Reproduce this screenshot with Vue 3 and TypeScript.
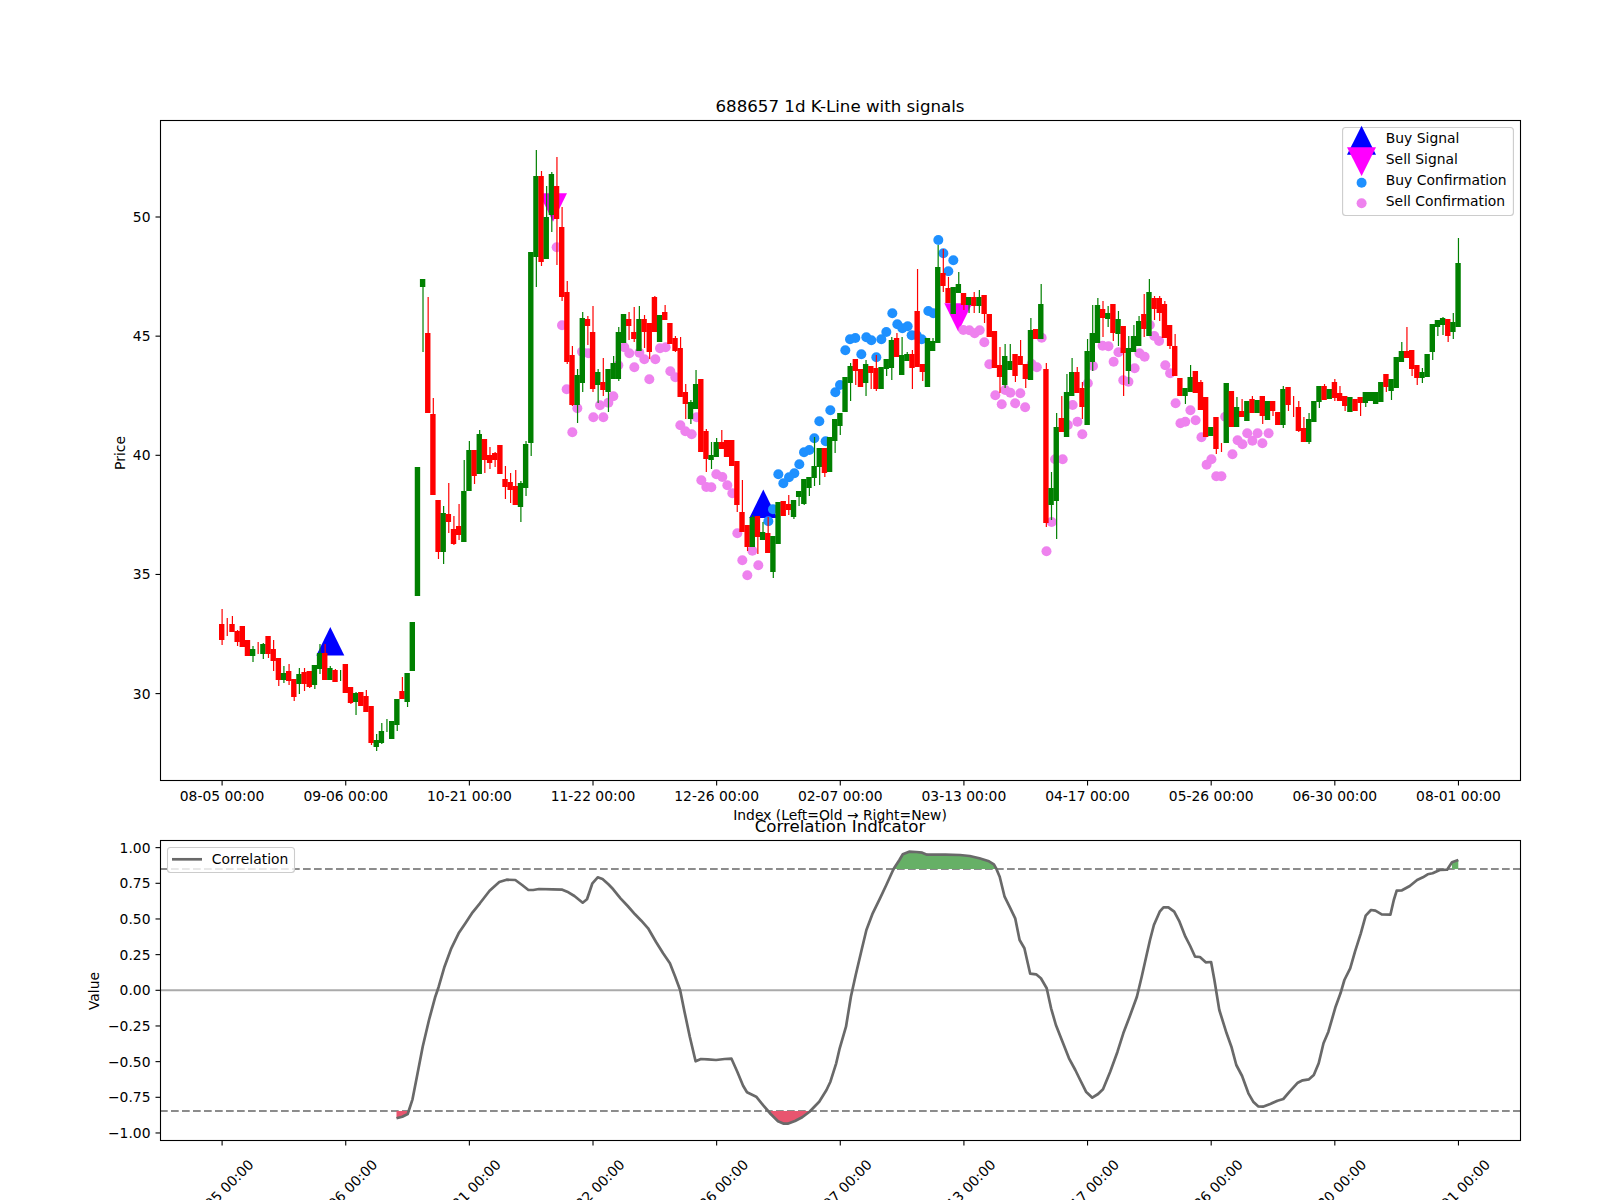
<script setup lang="ts">
type Candle = [number, number, number, number?, number?]
const raw: Candle[] = [
[0,624,640,609,645],[0,628,628,618,636],[0,624,632,616,632],[0,631,642,630,646],[0,626,647],[0,640,656],[1,649,656,646,662],[0,648,648,642,654],[1,644,654,643,659],[0,636,654,636,658],
[0,649,661,640,671],[0,658,680,658,686],[1,673,680,666,683],[0,671,681,664,685],[0,679,697,679,701],[1,674,684,668,694],[0,672,684,668,691],[0,671,687,671,688],[1,665,685,665,689],[1,653,669,644,674],
[0,653,680,644,680],[1,668,680,666,680],[0,670,682,669,682],[1,675,675,670,681],[0,664,693],[0,687,703,687,704],[1,693,702,692,715],[0,692,706],[0,696,712,690,712],[0,706,743,706,745],
[1,740,747,734,751],[1,731,743,723,744],[1,725,725,719,732],[1,721,739],[1,699,725,699,731],[0,691,699,677,699],[1,673,702,673,707],[1,622,671],[1,467,596],[1,279,287,279,352],
[0,333,413,297,413],[0,414,495,398,495],[0,500,552,500,559],[1,513,552,506,564],[0,514,522,483,533],[0,529,544,516,545],[0,526,535,504,540],[1,491,542,460,542],[1,450,491,441,491],[0,450,476,450,484],
[1,434,474,430,474],[0,439,460,439,473],[0,455,463,447,469],[0,453,460,452,467],[0,445,474],[0,479,487,466,499],[0,482,490,473,503],[0,486,505,470,505],[1,483,507,481,522],[1,444,488,441,496],
[1,252,443,252,456],[1,176,257,150,287],[0,176,262,171,266],[1,217,259,186,259],[1,174,215,172,232],[0,186,219,157,265],[0,227,297,207,301],[0,292,362,281,364],[0,355,405,346,406],[1,375,405,369,423],
[1,318,383,312,392],[0,319,326,316,345],[0,332,389,306,392],[1,372,385,369,403],[0,382,390,358,396],[1,369,392,369,412],[1,363,379,356,379],[1,332,379,327,381],[1,314,343],[0,319,326,312,340],
[0,332,339,307,342],[1,319,351,306,351],[0,319,332,315,348],[0,323,352,323,359],[0,297,332,296,332],[1,315,342],[0,312,320,305,320],[0,323,344],[0,338,351,336,352],[0,348,397,337,397],
[0,392,404,384,419],[1,402,419,400,424],[1,384,409,370,409],[0,379,452],[0,431,459,429,472],[1,455,460,442,469],[1,442,457,438,457],[0,442,449,430,449],[0,440,457],[0,440,466],
[0,461,505,461,512],[0,512,532,480,532],[0,525,547,525,551],[1,517,547,515,547],[0,516,537,516,554],[1,532,540,522,540],[0,533,553,517,553],[1,536,572,536,578],[1,502,544],[0,501,516],
[0,504,510,495,515],[1,500,517,500,519],[1,491,497,491,506],[1,479,504,479,505],[1,477,488,477,496],[1,466,478,437,486],[1,448,467,448,485],[0,448,473,448,477],[1,437,472],[1,419,441,419,453],
[1,413,426,413,435],[1,377,412],[1,366,383,363,401],[0,359,371,359,385],[0,369,387],[1,364,383,360,396],[0,366,373,366,389],[0,368,389,355,391],[1,367,389],[1,359,369,359,376],
[1,340,368,337,380],[0,338,357,333,357],[1,355,375,337,375],[1,354,361,352,361],[0,354,368,350,389],[0,311,367,269,367],[0,364,372,364,381],[1,338,387],[1,341,351,338,351],[1,267,343,245,343],
[0,273,286,249,292],[0,288,303,277,303],[1,287,314],[1,284,293,272,293],[0,293,305,293,310],[1,297,305,297,313],[0,297,306,292,313],[1,297,306,290,313],[0,295,314,295,323],[0,314,337],
[0,331,368],[0,365,377,347,393],[1,356,385,344,388],[1,361,370,344,370],[0,354,376,354,382],[0,356,365,340,365],[0,364,379,364,388],[1,330,380,318,380],[0,329,339],[1,304,339,284,339],
[0,369,523,363,527],[1,488,505,472,520],[1,427,501,413,539],[0,418,432,396,432],[1,392,437,374,437],[1,372,396,358,396],[0,372,393,367,393],[0,388,407,382,419],[1,351,425,339,425],[1,333,362,305,371],
[1,305,343,298,343],[0,309,318,301,337],[1,313,319,306,327],[0,304,333,304,341],[1,319,334,311,346],[0,326,353,326,396],[1,348,371,336,384],[1,336,352,325,352],[1,321,346,316,346],[0,314,329,294,337],
[1,292,336,279,336],[0,298,309,296,320],[0,298,313,296,321],[0,304,338,301,338],[0,325,346,325,349],[0,346,376,334,376],[0,378,396],[1,388,396,388,404],[1,377,392,365,392],[0,371,393],
[0,382,410,380,410],[0,397,437],[1,427,436],[0,417,449,417,454],[0,445,445,443,452],[1,383,443],[0,391,427],[1,407,427,397,427],[0,411,417,399,417],[1,401,421],
[0,399,413,396,413],[1,400,413],[0,396,416,396,424],[1,401,420],[0,401,411,401,416],[0,412,425],[1,389,425,386,428],[0,387,405,387,411],[0,405,405,396,417],[0,407,431,401,432],
[0,428,442,417,442],[1,419,442,413,444],[1,401,422],[1,386,402,386,408],[0,386,400,384,400],[1,389,399],[0,382,398,379,401],[0,393,401,386,401],[0,396,406,396,411],[1,397,412],
[0,399,411],[0,397,403,397,416],[1,392,403,392,407],[1,392,401],[1,392,404],[1,382,402],[0,374,387,374,392],[1,379,391,379,400],[1,357,388],[1,351,362,342,362],
[0,351,358,327,358],[0,350,369,350,376],[0,365,378,365,385],[1,372,378,368,383],[1,354,377],[1,324,352,324,360],[1,320,327,320,336],[1,318,325,317,335],[0,319,336,319,342],[1,322,332,313,339],
[1,263,327,238,327],
]
const xAt = (i: number) => 222.1 + i * 5.1515
const bodyW = 5.4
const candles = raw.map((c, i) => ({
  x: xAt(i),
  bx: xAt(i) - 0.4 - bodyW / 2,
  color: c[0] ? '#008000' : '#ff0000',
  top: c[1],
  h: c[2] - c[1],
  wt: c[3] ?? c[1],
  wb: c[4] ?? c[2],
}))

const map1 = (p: number[]) => [150 + p[0] / 3, 90 + p[1] / 3]
const map3 = (p: number[]) => [600 + p[0] / 3, 220 + p[1] / 3]
const map4 = (p: number[]) => [1000 + p[0] / 2.904, 90 + p[1] / 3]

const blueDots = [
[1015,60],[1030,100],[1060,121],[1045,154],[877,280],[892,313],[907,325],[923,319],[985,273],[1000,280],[935,346],[950,346],[965,358],[750,358],[766,354],[799,352],[814,361],[844,358],[859,336],[736,391],[784,403],[829,412],[720,495],[706,517],[691,571],[658,604],[643,655],[677,664],[612,697],[628,690],[598,733],[583,760],[567,772],[550,790],[535,763],[519,868],[505,904],
].map(map3)
const violetDots = [
...[[1220,472],[1236,706],[1250,898],[1267,1027],[1282,955],[1296,785],[1315,790],[1330,982]].map(map1),
...[[0,556],[10,592],[25,548],[40,529],[55,436],[73,382],[88,400],[103,442],[118,398],[133,418],[148,478],[166,418],[180,385],[197,382],[211,454],[226,472],[241,616],[256,634],[275,643],[290,592],[304,781],[319,801],[334,802],[349,763],[367,771],[382,796],[397,820],[412,940],[427,1021],[442,1066],[457,992],[475,1036],[1090,330],[1108,331],[1124,340],[1139,331],[1153,367],[1168,433],[1186,526]].map(map3),
...[[5,943],[15,900],[30,908],[44,940],[59,910],[73,952],[92,822],[107,832],[121,743],[150,1296],[135,1384],[182,1108],[160,1108],[197,1005],[211,945],[225,995],[239,1033],[255,880],[270,828],[298,767],[315,769],[330,815],[344,787],[358,871],[373,875],[391,835],[405,790],[420,800],[435,705],[448,738],[462,753],[480,826],[494,850],[510,940],[524,1000],[538,995],[553,961],[568,991],[585,1042],[600,1124],[614,1108],[628,1159],[643,1159],[654,980],[675,1093],[690,1051],[704,1063],[718,1030],[733,1052],[748,1030],[762,1060],[780,1030]].map(map4),
]
const up = (x: number, y: number) => `${x},${y} ${x - 14},${y + 28.5} ${x + 14},${y + 28.5}`
const down = (x: number, y: number) => `${x - 14},${y} ${x + 14},${y} ${x},${y + 28.5}`

const map5 = (p: number[]) => [80 + p[0] / 2.063, 820 + p[1] / 3]
const map6 = (p: number[]) => [800 + p[0] / 2.063, 820 + p[1] / 3]
const line = [
...[[653,895],[665,890],[676,882],[686,838],[695,770],[707,680],[720,600],[733,530],[740,500],[752,440],[766,385],[781,340],[795,310],[810,277],[825,250],[845,212],[865,186],[880,179],[898,180],[912,195],[925,210],[935,210],[947,207],[975,208],[995,209],[1005,215],[1020,228],[1037,248],[1046,238],[1057,190],[1068,172],[1078,177],[1090,193],[1100,208],[1115,235],[1130,258],[1145,283],[1158,302],[1172,325],[1188,365],[1203,400],[1217,430],[1228,470],[1238,510],[1247,575],[1258,650],[1270,724],[1281,717],[1295,718],[1312,720],[1330,717],[1344,716],[1356,755],[1368,797],[1376,817],[1395,830],[1410,857],[1425,882],[1440,904],[1452,911],[1460,911],[1475,903],[1490,892],[1505,875],[1525,845],[1540,810],[1548,785],[1560,730]].map(map5),
...[[82,685],[95,620],[105,530],[115,465],[127,390],[137,330],[150,280],[165,235],[178,195],[192,150],[196,140],[205,120],[212,103],[225,95],[240,96],[252,98],[262,104],[300,104],[330,105],[350,108],[370,115],[390,124],[400,133],[405,146],[412,170],[422,230],[433,262],[444,295],[453,360],[463,385],[470,430],[475,461],[487,463],[497,475],[509,505],[518,565],[528,615],[540,660],[555,715],[568,750],[578,780],[590,815],[603,833],[615,822],[625,808],[640,755],[655,695],[667,640],[680,590],[695,530],[705,470],[715,405],[722,360],[730,315],[742,275],[750,262],[760,262],[772,275],[783,305],[795,350],[805,378],[815,410],[825,411],[837,427],[848,426],[855,480],[865,570],[880,640],[890,680],[900,735],[912,768],[925,820],[935,845],[945,859],[955,860],[970,852],[985,842],[997,837],[1010,815],[1027,788],[1037,781],[1050,778],[1060,765],[1070,730],[1080,670],[1090,635],[1105,560],[1115,520],[1123,480],[1135,445],[1145,395],[1157,340],[1167,287],[1178,270],[1187,272],[1200,283],[1218,284],[1225,240],[1231,212],[1242,211],[1258,198],[1273,180],[1285,172],[1295,163],[1305,160],[1320,150],[1335,149],[1345,127],[1358,120]].map(map6),
]
const toPts = (a: number[][]) => a.map((p) => `${p[0].toFixed(1)},${p[1].toFixed(1)}`).join(' ')
const linePts = toPts(line)

function regions(level: number, inside: (y: number) => boolean): string[] {
  const out: string[] = []
  let cur: number[][] = []
  const flush = () => {
    if (cur.length) {
      const first = cur[0]
      const last = cur[cur.length - 1]
      out.push(toPts([[first[0], level], ...cur, [last[0], level]]))
    }
    cur = []
  }
  line.forEach((p) => {
    if (inside(p[1])) cur.push(p)
    else flush()
  })
  flush()
  return out
}
const redAreas = regions(1111, (y) => y > 1111)
const greenAreas = regions(869, (y) => y < 869)

const ticks = ['08-05', '09-06', '10-21', '11-22', '12-26', '02-07', '03-13', '04-17', '05-26', '06-30', '08-01'].map((d, i) => ({
  x: xAt(i * 24),
  label: `${d} 00:00`,
}))
const priceTicks = [50, 45, 40, 35, 30].map((p) => ({ label: String(p), y: 217 + (50 - p) * 23.83 }))
const valueTicks = [1, 0.75, 0.5, 0.25, 0, -0.25, -0.5, -0.75, -1].map((v) => ({
  label: (v < 0 ? '\u2212' : '') + Math.abs(v).toFixed(2),
  y: 990.3 - v * 142.67,
}))
</script>

<template>
  <div class="figure">
    <svg class="plot" width="1600" height="1200" viewBox="0 0 1600 1200">
      <text class="title" x="840" y="111.7">688657 1d K-Line with signals</text>

      <!-- signals -->
      <polygon class="buy" :points="up(330.3, 627)" />
      <polygon class="buy" :points="up(763.3, 489.5)" />
      <polygon class="sell" :points="down(553, 193.3)" />
      <polygon class="sell" :points="down(958.3, 303.3)" />
      <circle v-for="(d, i) in blueDots" :key="'b' + i" class="blue" :cx="d[0]" :cy="d[1]" r="5" />
      <circle v-for="(d, i) in violetDots" :key="'v' + i" class="violet" :cx="d[0]" :cy="d[1]" r="5" />

      <!-- candles -->
      <g v-for="(c, i) in candles" :key="'c' + i">
        <line :x1="c.x" :x2="c.x" :y1="c.wt" :y2="c.wb" :stroke="c.color" stroke-width="1.2" />
        <rect v-if="c.h > 0" :x="c.bx" :y="c.top" :width="bodyW" :height="c.h" :fill="c.color" />
      </g>

      <!-- upper axes -->
      <rect class="spine" x="160.5" y="120.5" width="1360" height="660" />
      <g v-for="t in ticks" :key="'t' + t.x">
        <line class="tick" :x1="t.x" :x2="t.x" y1="781" y2="785.5" />
        <text class="label mid" :x="t.x" y="801">{{ t.label }}</text>
      </g>
      <g v-for="t in priceTicks" :key="'p' + t.label">
        <line class="tick" x1="155.5" x2="160" :y1="t.y" :y2="t.y" />
        <text class="label end" x="150.5" :y="t.y + 5">{{ t.label }}</text>
      </g>
      <text class="label mid" x="840" y="820">Index (Left=Old → Right=New)</text>
      <text class="label mid" transform="translate(125 453) rotate(-90)">Price</text>

      <!-- upper legend -->
      <rect class="legend" x="1342.6" y="127.5" width="170.8" height="88" rx="3" />
      <polygon class="buy" points="1361.6,125.7 1347,154.7 1376,154.7" />
      <polygon class="sell" points="1347,147.3 1376,147.3 1361.6,176" />
      <circle class="blue" cx="1361.6" cy="182.7" r="5" />
      <circle class="violet" cx="1361.6" cy="203.3" r="5" />
      <text class="label" x="1385.8" y="143">Buy Signal</text>
      <text class="label" x="1385.8" y="164">Sell Signal</text>
      <text class="label" x="1385.8" y="185">Buy Confirmation</text>
      <text class="label" x="1385.8" y="206">Sell Confirmation</text>

      <!-- lower axes -->
      <text class="title" x="840" y="831.7">Correlation Indicator</text>
      <line class="zero" x1="160" x2="1520" y1="990.3" y2="990.3" />
      <line class="dash" x1="160" x2="1520" y1="869" y2="869" />
      <line class="dash" x1="160" x2="1520" y1="1111" y2="1111" />
      <polygon v-for="(a, i) in redAreas" :key="'r' + i" class="area-red" :points="a" />
      <polygon v-for="(a, i) in greenAreas" :key="'g' + i" class="area-green" :points="a" />
      <polyline class="corr" :points="linePts" />
      <rect class="spine" x="160.5" y="840.5" width="1360" height="300" />
      <g v-for="t in ticks" :key="'l' + t.x">
        <line class="tick" :x1="t.x" :x2="t.x" y1="1141" y2="1145.5" />
        <text class="label mid" :transform="`translate(${t.x - 1} 1192) rotate(-45)`" y="5">{{ t.label }}</text>
      </g>
      <g v-for="t in valueTicks" :key="'y' + t.label">
        <line class="tick" x1="155.5" x2="160" :y1="t.y" :y2="t.y" />
        <text class="label end" x="150.5" :y="t.y + 5">{{ t.label }}</text>
      </g>
      <text class="label mid" transform="translate(99 991) rotate(-90)">Value</text>

      <!-- lower legend -->
      <rect class="legend" x="167.5" y="847.5" width="127" height="25" rx="3" />
      <line class="corr" x1="172" x2="202" y1="859.3" y2="859.3" />
      <text class="label" x="211.8" y="864">Correlation</text>
    </svg>
  </div>
</template>

<style scoped>
.figure {
  width: 1600px;
  height: 1200px;
  overflow: hidden;
  background: #fff;
}
.plot {
  display: block;
}
.title {
  font-family: "DejaVu Sans", sans-serif;
  font-size: 16.67px;
  text-anchor: middle;
  fill: #000;
}
.label {
  font-family: "DejaVu Sans", sans-serif;
  font-size: 13.89px;
  fill: #000;
}
.mid {
  text-anchor: middle;
}
.end {
  text-anchor: end;
}
.buy {
  fill: #0000ff;
}
.sell {
  fill: #ff00ff;
}
.blue {
  fill: #1e90ff;
}
.violet {
  fill: #ee82ee;
}
.spine {
  fill: none;
  stroke: #000;
  stroke-width: 1.1;
}
.tick {
  stroke: #000;
  stroke-width: 1.1;
}
.legend {
  fill: rgba(255, 255, 255, 0.8);
  stroke: #ccc;
  stroke-width: 1.1;
}
.zero {
  stroke: #aaa;
  stroke-width: 2;
}
.dash {
  stroke: #808080;
  stroke-width: 2;
  stroke-dasharray: 7.7 3.3;
  opacity: 0.9;
}
.corr {
  fill: none;
  stroke: #696969;
  stroke-width: 2.7;
  stroke-linejoin: round;
}
.area-red {
  fill: #e8556f;
}
.area-green {
  fill: #66b066;
}
</style>
